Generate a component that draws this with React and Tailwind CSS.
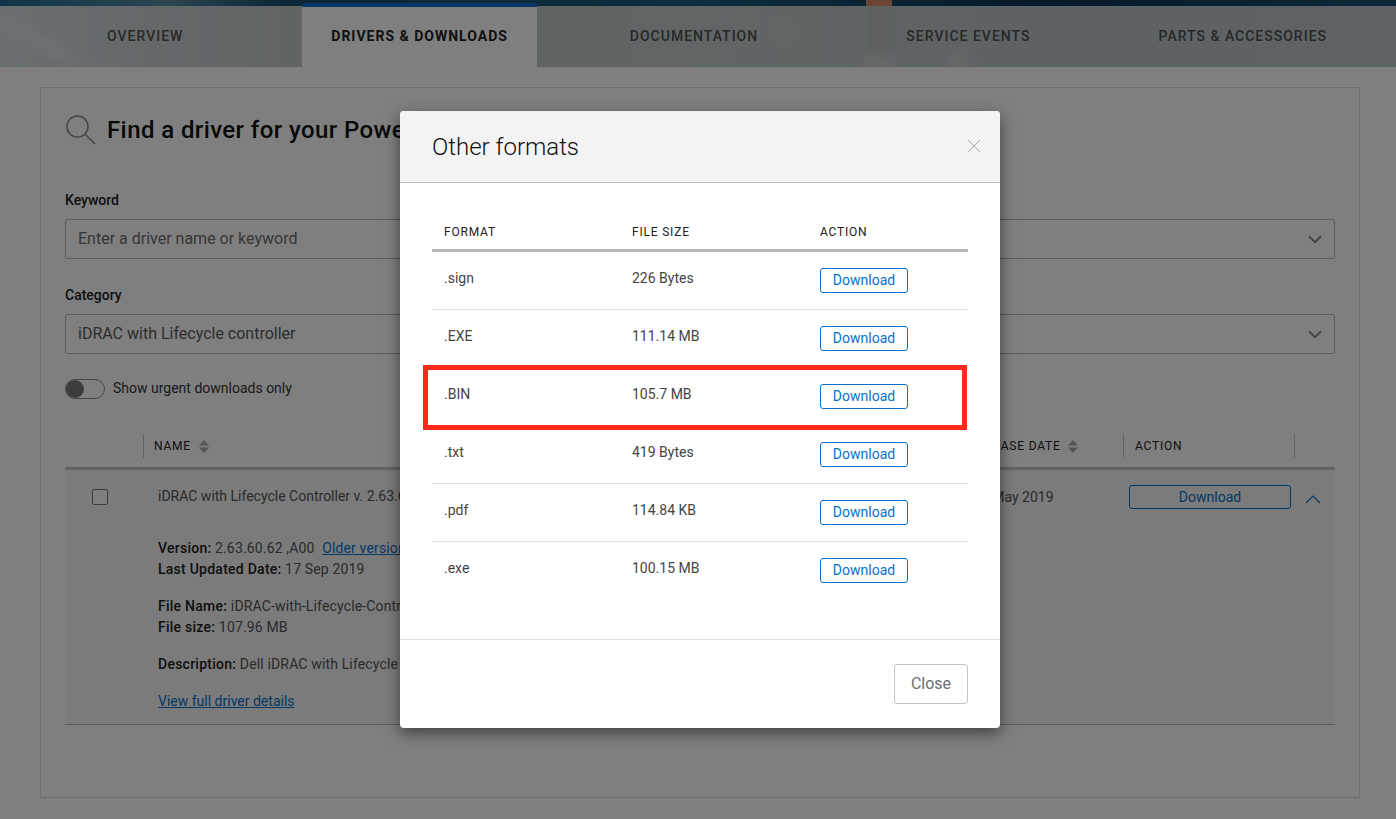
import React from "react";

const tabs = ["Overview", "Drivers & Downloads", "Documentation", "Service Events", "Parts & Accessories"];
const rows = [
  [".sign", "226 Bytes"],
  [".EXE", "111.14 MB"],
  [".BIN", "105.7 MB"],
  [".txt", "419 Bytes"],
  [".pdf", "114.84 KB"],
  [".exe", "100.15 MB"],
];

function Chevron() {
  return (
    <svg width="14" height="9" viewBox="0 0 14 9" fill="none" stroke="#8a8a8a" strokeWidth="2" className="shrink-0">
      <path d="M1 1.2l6 6 6-6" />
    </svg>
  );
}

function Sort() {
  return (
    <svg width="10" height="13" viewBox="0 0 10 13" fill="#a8a8a8" className="shrink-0">
      <path d="M5 0l5 5.5H0zM5 13L0 7.5h10z" />
    </svg>
  );
}

function Hero() {
  return (
    <svg className="absolute inset-0 w-full h-full" viewBox="0 0 1396 67" preserveAspectRatio="none">
      <defs>
        <linearGradient id="tabsBg" x1="0" y1="0" x2="1" y2="0">
          <stop offset="0" stopColor="#d2dcdf" />
          <stop offset="0.22" stopColor="#c2c6c8" />
          <stop offset="0.5" stopColor="#c0cacc" />
          <stop offset="0.75" stopColor="#bac4c8" />
          <stop offset="1" stopColor="#bcc6ca" />
        </linearGradient>
        <linearGradient id="topBg" x1="0" y1="0" x2="1" y2="0">
          <stop offset="0" stopColor="#1d6d92" />
          <stop offset="0.12" stopColor="#5a8aa0" />
          <stop offset="0.2" stopColor="#1b4f70" />
          <stop offset="0.5" stopColor="#1d5a7c" />
          <stop offset="0.75" stopColor="#0a3454" />
          <stop offset="1" stopColor="#1a5272" />
        </linearGradient>
        <filter id="soft" x="-30%" y="-30%" width="160%" height="160%">
          <feGaussianBlur stdDeviation="5" />
        </filter>
      </defs>
      <rect width="1396" height="67" fill="url(#tabsBg)" />
      <g filter="url(#soft)" opacity="0.4">
        <path d="M0 28L60 62L90 62L0 10Z" fill="#e8f0f2" />
        <ellipse cx="746" cy="26" rx="12" ry="18" fill="#d0cfca" />
        <ellipse cx="784" cy="30" rx="12" ry="14" fill="#cfd0cc" />
        <ellipse cx="878" cy="64" rx="16" ry="8" fill="#e2e4e2" />
        <ellipse cx="958" cy="60" rx="12" ry="10" fill="#dcdedc" />
      </g>
      <rect x="866" y="6" width="28" height="44" fill="#c8b8ac" opacity="0.25" />
      <rect width="1396" height="6" fill="url(#topBg)" />
      <rect x="866" y="0" width="26" height="6" fill="#d88a64" />
    </svg>
  );
}

export default function App() {
  return (
    <div className="relative w-[1396px] h-[819px] overflow-hidden bg-white text-[14px] leading-[20px] text-[#444] [font-family:Roboto,sans-serif]">
      <header className="relative h-[67px]">
        <Hero />
        <nav className="relative ml-[8px] w-[1372px] h-[67px] grid grid-cols-5 items-end">
          {tabs.map((t, i) =>
            i === 1 ? (
              <div key={t} className="mx-[20px] h-[64px] bg-white border-t-4 border-[#0672cb] rounded-t-[3px] flex items-center justify-center pb-[2px] uppercase font-bold tracking-[1px] text-[#222]">
                {t}
              </div>
            ) : (
              <div key={t} className="h-[61px] flex items-center justify-center pb-[1px] uppercase font-medium tracking-[1px] text-[#505050]">
                {t}
              </div>
            )
          )}
        </nav>
      </header>

      <main className="ml-[40px] w-[1320px] mt-[20px] h-[711px] border border-[#dcdcdc] px-[24px]">
        <div className="flex items-start gap-[11px] pt-[27px] ml-[1px] h-[70px]">
          <svg width="30" height="30" viewBox="0 0 30 30" fill="none" stroke="#8a8a8a" strokeWidth="1.5" className="shrink-0">
            <circle cx="11.5" cy="11.5" r="10.5" />
            <path d="M19 19l10 10" />
          </svg>
          <h1 className="text-[24px] leading-[30px] font-medium tracking-[0.4px] text-[#111] whitespace-nowrap">Find a driver for your PowerEdge R630</h1>
        </div>

        <label className="block mt-[32px] font-medium text-[#222]">Keyword</label>
        <div className="mt-[9px] h-[40px] flex items-center justify-between border border-[#bbb] rounded-[2px] pl-[12px] pr-[12px] text-[16px] text-[#6e6e6e]">
          <span>Enter a driver name or keyword</span>
          <Chevron />
        </div>

        <label className="block mt-[26px] font-medium text-[#222]">Category</label>
        <div className="mt-[9px] h-[40px] flex items-center justify-between border border-[#bbb] rounded-[2px] pl-[12px] pr-[12px] text-[16px] text-[#5a5a5a]">
          <span>iDRAC with Lifecycle controller</span>
          <Chevron />
        </div>

        <div className="mt-[25px] h-[20px] flex items-center gap-[8px]">
          <span className="w-[40px] h-[20px] rounded-full border border-[#8a8a8a] bg-white flex items-center">
            <span className="w-[18px] h-[18px] rounded-full bg-[#7a7a7a]"></span>
          </span>
          <span className="text-[#333] pb-[2px]">Show urgent downloads only</span>
        </div>

        <div className="mt-[35px] h-[33px] flex text-[12px] tracking-[0.8px] text-[#222] uppercase">
          <div className="w-[78px]"></div>
          <div className="w-[816px] h-[24px] border-l border-[#c8c8c8] pl-[10px] flex items-center gap-[8px]">
            <span>Name</span>
            <Sort />
          </div>
          <div className="w-[164px] h-[24px] pl-[11px] flex items-center gap-[7px]">
            <span>Release Date</span>
            <Sort />
          </div>
          <div className="w-[172px] h-[24px] border-l border-r border-[#c8c8c8] pl-[11px] flex items-center">Action</div>
        </div>

        <section className="h-[258px] border-t-[3px] border-b border-t-[#c4c4c4] border-b-[#bbb] bg-[#f6f6f6] flex">
          <div className="w-[27px] shrink-0"></div>
          <div className="w-[16px] h-[16px] mt-[19px] shrink-0 border border-[#777] rounded-[2px] bg-white"></div>
          <div className="w-[50px] shrink-0"></div>
          <div className="w-[802px] shrink-0 pt-[16px] text-[#555]">
            <div className="whitespace-nowrap">iDRAC with Lifecycle Controller v. 2.63.60.62, A00</div>
            <div className="mt-[32px] leading-[21px] tracking-[0.15px]">
              <div className="whitespace-nowrap"><b className="font-medium text-[#222] tracking-[0.25px]">Version:</b> 2.63.60.62 ,A00 <a className="ml-[4px] underline text-[#0672cb]">Older versions</a></div>
              <div><b className="font-medium text-[#222] tracking-[0.25px]">Last Updated Date:</b> 17 Sep 2019</div>
            </div>
            <div className="mt-[16px] leading-[21px] tracking-[0.15px]">
              <div className="whitespace-nowrap"><b className="font-medium text-[#222] tracking-[0.25px]">File Name:</b> iDRAC-with-Lifecycle-Controller_Firmware.EXE</div>
              <div><b className="font-medium text-[#222] tracking-[0.25px]">File size:</b> 107.96 MB</div>
            </div>
            <div className="mt-[16px] whitespace-nowrap tracking-[0.15px]"><b className="font-medium text-[#222] tracking-[0.25px]">Description:</b> Dell iDRAC with Lifecycle Controller firmware update</div>
            <div className="mt-[17px]"><a className="underline text-[#0672cb]">View full driver details</a></div>
          </div>
          <div className="w-[169px] shrink-0 pt-[17px] pl-[13px] text-[#555] whitespace-nowrap">21 May 2019</div>
          <div className="w-[162px] h-[24px] mt-[15px] shrink-0 border border-[#0672cb] rounded-[3px] flex items-center justify-center text-[#0672cb]">Download</div>
          <svg width="16" height="9" viewBox="0 0 16 9" fill="none" stroke="#0672cb" strokeWidth="1.2" className="ml-[14px] mt-[25px] shrink-0">
            <path d="M1 8l7-7 7 7" />
          </svg>
        </section>
      </main>

      <div className="absolute inset-0 bg-black/50"></div>

      <div className="absolute left-[400px] top-[111px] w-[600px] h-[617px] bg-white rounded-[4px] shadow-[0_5px_15px_rgba(0,0,0,0.5)] flex flex-col overflow-hidden">
        <div className="h-[72px] bg-[#f3f3f3] border-b border-[#bdbdbd] flex items-center justify-between pl-[32px] pr-[19px] shrink-0">
          <h2 className="text-[24px] leading-[30px] font-light text-[#111]">Other formats</h2>
          <svg width="14" height="14" viewBox="0 0 14 14" fill="none" stroke="#a9a9a9" strokeWidth="1" className="mb-[2px]">
            <path d="M1 1l12 12M13 1L1 13" />
          </svg>
        </div>

        <div className="mx-[32px] mt-[35px] h-[34px] pt-[5px] grid grid-cols-[188px_188px_160px] border-b-[3px] border-[#b8b8b8] text-[12px] leading-[18px] tracking-[0.8px] text-[#222] uppercase">
          <div className="pl-[12px]">Format</div>
          <div className="pl-[12px]">File size</div>
          <div className="pl-[12px]">Action</div>
        </div>

        <div className="mx-[32px] flex-1">
          {rows.map(([f, s], i) => (
            <div key={f} className={"h-[58px] grid grid-cols-[188px_188px_160px] text-[#444] " + (i < 5 ? "border-b border-[#e0e0e0]" : "")}>
              <div className="pl-[12px] pt-[16px]">{f}</div>
              <div className="pl-[12px] pt-[16px]">{s}</div>
              <div className="pl-[12px] pt-[16px]">
                <div className="w-[88px] h-[25px] pb-[2px] border border-[#0672cb] rounded-[3px] flex items-center justify-center text-[#0672cb]">Download</div>
              </div>
            </div>
          ))}
        </div>

        <div className="h-[89px] border-t border-[#e0e0e0] flex justify-end items-start pt-[24px] pr-[32px] shrink-0">
          <div className="w-[74px] h-[40px] border border-[#c4c4c4] rounded-[3px] flex items-center justify-center text-[16px] text-[#6e6e6e]">Close</div>
        </div>
      </div>

      <div className="absolute left-[423px] top-[365px] w-[544px] h-[65px] border-[5px] border-[#ff2a1a]"></div>
    </div>
  );
}
